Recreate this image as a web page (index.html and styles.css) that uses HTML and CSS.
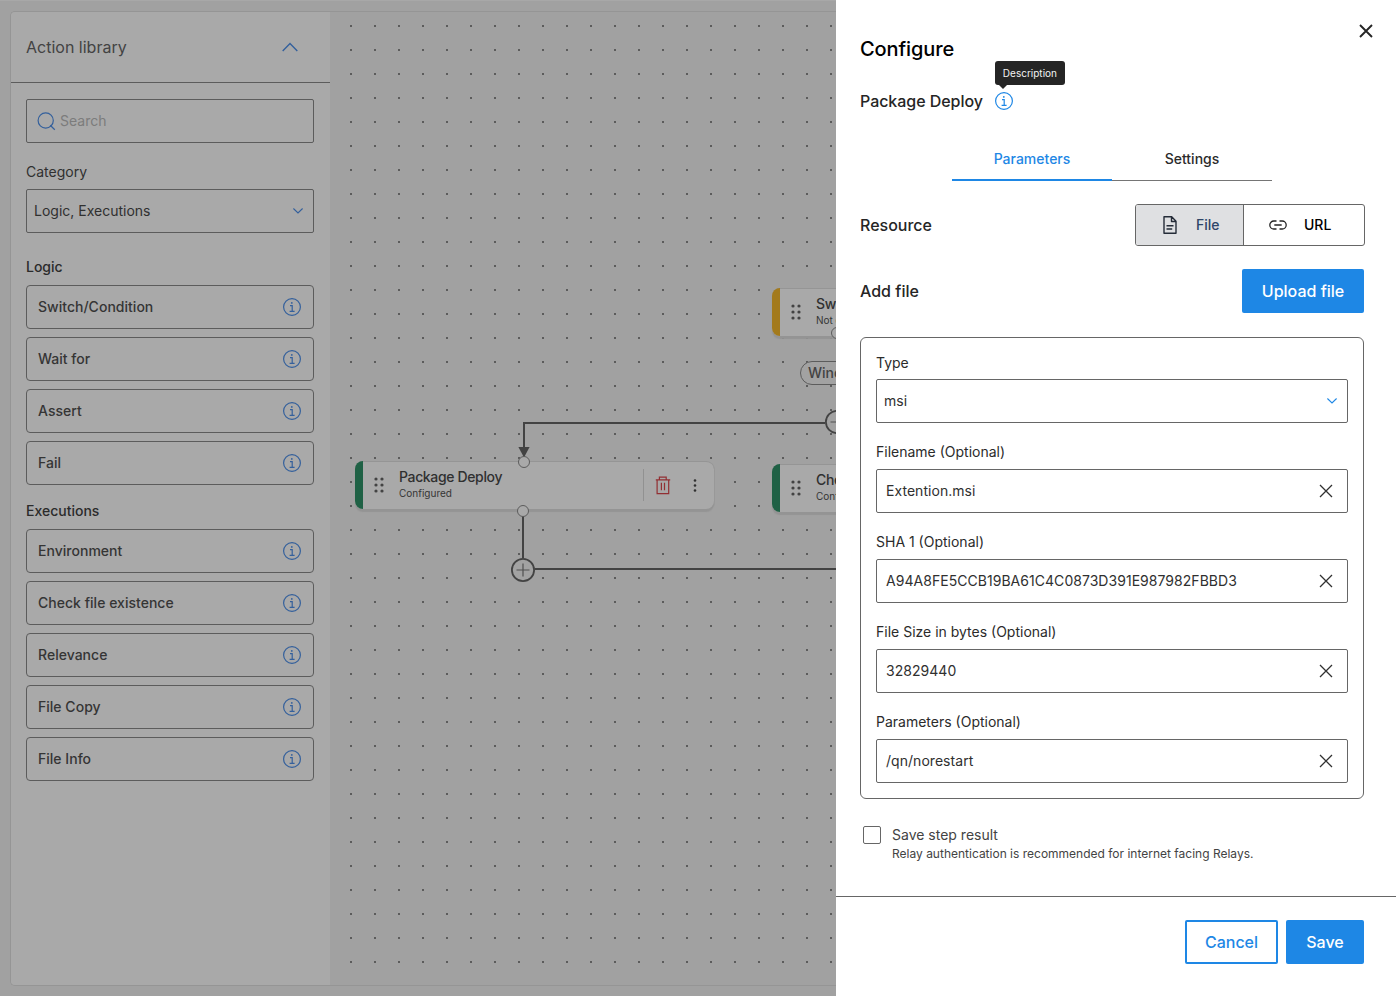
FILE: index.html
```html
<!DOCTYPE html>
<html lang="en">
<head>
<meta charset="utf-8">
<title>Configure action</title>
<link rel="stylesheet" href="styles.css">
</head>
<body>
<svg class="defs" width="0" height="0">
  <symbol id="info" viewBox="0 0 18 18"><circle cx="9" cy="9" r="8.4" fill="none" stroke="currentColor" stroke-width="1.2"/><circle cx="8.8" cy="4.9" r=".9" fill="currentColor"/><path d="M7 7.7h2.2v5.6M6.6 13.4h5" fill="none" stroke="currentColor" stroke-width="1.2"/></symbol>
  <symbol id="cross" viewBox="0 0 14 14"><path d="M1 1l12 12M13 1L1 13" fill="none" stroke="currentColor" stroke-width="1.3"/></symbol>
  <symbol id="chev" viewBox="0 0 10 6"><path d="M.4.5L5 5 9.6.5" fill="none" stroke="currentColor" stroke-width="1.1"/></symbol>
  <symbol id="grip" viewBox="0 0 10 16"><g fill="currentColor"><circle cx="2" cy="2" r="1.6"/><circle cx="8" cy="2" r="1.6"/><circle cx="2" cy="8" r="1.6"/><circle cx="8" cy="8" r="1.6"/><circle cx="2" cy="14" r="1.6"/><circle cx="8" cy="14" r="1.6"/></g></symbol>
</svg>
<div class="app">
  <div class="workspace">
    <div class="shell">
      <aside class="library">
        <header class="library-head"><span>Action library</span><svg class="collapse" width="16" height="10" viewBox="0 0 16 10"><path d="M.7 9L8 1.6 15.3 9" fill="none" stroke="currentColor" stroke-width="1.4"/></svg></header>
        <div class="library-body">
          <div class="search"><svg width="19" height="19" viewBox="0 0 19 19"><circle cx="8.7" cy="8.5" r="7.6" fill="none" stroke="currentColor" stroke-width="1.2"/><path d="M13.2 13.2l4.6 4.5" stroke="currentColor" stroke-width="1.2"/></svg><span>Search</span></div>
          <div class="label">Category</div>
          <div class="category"><span>Logic, Executions</span><svg width="10" height="6"><use href="#chev"/></svg></div>
          <div class="group first">Logic</div>
          <div class="items">
            <div class="item"><span>Switch/Condition</span><svg width="18" height="18"><use href="#info"/></svg></div>
            <div class="item"><span>Wait for</span><svg width="18" height="18"><use href="#info"/></svg></div>
            <div class="item"><span>Assert</span><svg width="18" height="18"><use href="#info"/></svg></div>
            <div class="item"><span>Fail</span><svg width="18" height="18"><use href="#info"/></svg></div>
          </div>
          <div class="group">Executions</div>
          <div class="items">
            <div class="item"><span>Environment</span><svg width="18" height="18"><use href="#info"/></svg></div>
            <div class="item"><span>Check file existence</span><svg width="18" height="18"><use href="#info"/></svg></div>
            <div class="item"><span>Relevance</span><svg width="18" height="18"><use href="#info"/></svg></div>
            <div class="item"><span>File Copy</span><svg width="18" height="18"><use href="#info"/></svg></div>
            <div class="item"><span>File Info</span><svg width="18" height="18"><use href="#info"/></svg></div>
          </div>
        </div>
      </aside>
      <main class="canvas">
        <div class="node node-switch"><i class="stripe amber"></i><svg class="grip" width="10" height="16"><use href="#grip"/></svg><div class="node-text"><b>Switch/Condition</b><small>Not configured</small></div></div>
        <div class="node node-package"><i class="stripe"></i><svg class="grip" width="10" height="16"><use href="#grip"/></svg><div class="node-text"><b>Package Deploy</b><small>Configured</small></div>
          <div class="node-tools">
            <svg class="trash" width="16" height="19" viewBox="0 0 16 19"><path d="M.8 3.9h14.4M4.4 3.9V1.100h6.800v2.800M2.100 3.900v13.700h11.600V3.900M6.400 6.700v7.600M9.500 6.700v7.600" fill="none" stroke="currentColor" stroke-width="1.2"/></svg>
            <svg width="4" height="13" viewBox="0 0 4 13"><g fill="currentColor"><circle cx="2" cy="1.5" r="1.3"/><circle cx="2" cy="6.5" r="1.3"/><circle cx="2" cy="11.5" r="1.3"/></g></svg>
          </div></div>
        <div class="node node-check"><i class="stripe"></i><svg class="grip" width="10" height="16"><use href="#grip"/></svg><div class="node-text"><b>Check file existence</b><small>Configured</small></div></div>
        <div class="pill">Windows</div>
        <svg class="wires" width="506" height="973" viewBox="330 12 506 973">
          <g fill="none" stroke="#434343" stroke-width="2"><path d="M825 423H524V450M523 516V558M535 569H836"/></g>
          <path d="M518.4 447h11.2L524 457.5z" fill="#434343"/>
          <g fill="#a9a9a9" stroke="#5c5c5c"><circle cx="524" cy="462" r="5.5"/><circle cx="523" cy="511" r="5.5"/><circle cx="837" cy="333" r="5.5"/></g>
          <g fill="#a2a2a2" stroke="#434343" stroke-width="1.8"><circle cx="523" cy="570" r="11.1"/><circle cx="837" cy="422" r="11.1"/></g>
          <path d="M516.5 570h13M523 563.5v13M830.5 422h13" stroke="#505050" stroke-width="1.2"/>
        </svg>
      </main>
    </div>
  </div>
  <section class="panel">
    <div class="panel-main">
      <div class="title-row"><h1>Configure</h1><svg class="close" width="14" height="14" viewBox="0 0 14 14"><path d="M1 1l12 12M13 1L1 13" stroke="currentColor" stroke-width="1.9"/></svg></div>
      <div class="action-row"><span>Package Deploy</span><div class="hint"><svg width="18" height="18"><use href="#info"/></svg><div class="tooltip">Description</div></div></div>
      <nav class="tabs"><div class="tab active">Parameters</div><div class="tab">Settings</div></nav>
      <div class="row resource"><span>Resource</span>
        <div class="toggle">
          <div class="option selected"><svg width="14" height="18" viewBox="0 0 14 18"><path d="M1 .8h7.7L13 5.3v11.9H1zM8.5.8v4.7H13M3.5 9.8h7M3.5 13h5.7" fill="none" stroke="currentColor" stroke-width="1.4" stroke-linejoin="round"/></svg><span>File</span></div>
          <div class="option"><svg width="18" height="10" viewBox="0 0 18 10"><path d="M7.5 1H4.8a4 4 0 0 0 0 8h2.7M10.5 1h2.7a4 4 0 0 1 0 8h-2.7M5.3 5h7.4" fill="none" stroke="currentColor" stroke-width="1.3"/></svg><span>URL</span></div>
        </div></div>
      <div class="row add"><span>Add file</span><div class="btn primary upload">Upload file</div></div>
      <div class="form">
        <div class="field type"><label>Type</label><div class="box"><span>msi</span><svg class="blue" width="10" height="6"><use href="#chev"/></svg></div></div>
        <div class="field"><label>Filename (Optional)</label><div class="box"><span>Extention.msi</span><svg width="14" height="14"><use href="#cross"/></svg></div></div>
        <div class="field"><label>SHA 1 (Optional)</label><div class="box"><span>A94A8FE5CCB19BA61C4C0873D391E987982FBBD3</span><svg width="14" height="14"><use href="#cross"/></svg></div></div>
        <div class="field"><label>File Size in bytes (Optional)</label><div class="box"><span>32829440</span><svg width="14" height="14"><use href="#cross"/></svg></div></div>
        <div class="field"><label>Parameters (Optional)</label><div class="box"><span>/qn/norestart</span><svg width="14" height="14"><use href="#cross"/></svg></div></div>
      </div>
      <div class="check"><i class="checkbox"></i><div><div class="check-label">Save step result</div><div class="check-note">Relay authentication is recommended for internet facing Relays.</div></div></div>
    </div>
    <footer class="actions"><div class="btn outline">Cancel</div><div class="btn primary save">Save</div></footer>
  </section>
</div>
</body>
</html>
```
FILE: styles.css
```css
* { box-sizing: border-box; }
body { margin: 0; font-family: Inter, "Liberation Sans", sans-serif; font-size: 14px; line-height: 20px; color: #2b2b2b; }
svg { display: block; flex: none; }
.defs { position: absolute; }
.app { display: flex; width: 1396px; height: 996px; overflow: hidden; background: #a1a1a1; }
.workspace { flex: none; width: 836px; padding: 10px 0 10px 10px; border-top: 1px solid #a8a8a8; }
.shell { display: flex; height: 975px; border: 1px solid #959595; border-right: 0; border-radius: 5px 0 0 5px; overflow: hidden; }

.library { flex: none; width: 319px; background: #a9a9a9; }
.library-head { display: flex; align-items: center; justify-content: space-between; height: 71px; padding: 0 32px 0 15px; border-bottom: 1px solid #5c5c5c; font-size: 16px; color: #434343; }
.collapse, .search svg, .category svg, .item svg { color: #34609c; }
.library-body { padding: 16px 16px 0 15px; }
.search, .category { display: flex; align-items: center; height: 44px; border: 1px solid #5c5c5c; border-radius: 2px; }
.search { gap: 4px; padding-left: 10px; color: #7c7c7c; }
.label { margin: 19px 0 7px; color: #303030; }
.category { justify-content: space-between; padding: 0 10px 0 7px; color: #303030; }
.group { margin: 16px 0 8px; font-weight: 500; }
.group.first { margin-top: 24px; }
.items { display: grid; gap: 8px; }
.item { display: flex; align-items: center; justify-content: space-between; height: 44px; padding: 0 12px 0 11px; border: 1px solid #5c5c5c; border-radius: 4px; font-weight: 500; color: #353535; letter-spacing: .02px; }

.canvas { position: relative; flex: 1; overflow: hidden; background: #a1a1a1 conic-gradient(from 90deg at 22px 22px, #5c5c5c 0 25%, transparent 0) -2px -9px / 24px 24px; }
.wires { position: absolute; left: 0; top: 0; }
.node { position: absolute; display: flex; align-items: center; width: 359px; height: 48px; border-top: 1px solid #959595; border-radius: 8px; background: #a9a9a9; box-shadow: 0 3px 1px #949494, 1px 1px 0 #989898; }
.node-package { left: 25px; top: 449px; }
.node-switch { left: 442px; top: 276px; }
.node-check { left: 442px; top: 452px; }
.stripe { align-self: stretch; width: 8px; margin-top: -1px; border-radius: 8px 0 0 8px; background: #1f6145; }
.stripe.amber { background: #a37a1c; }
.grip { margin: -1px 0 0 11px; color: #434343; }
.node-text { display: flex; flex-direction: column; margin: -4px 0 0 15px; flex: 1; }
.node-text b { font-weight: 500; line-height: 18px; color: #303030; letter-spacing: -.36px; white-space: nowrap; }
.node-text small { font-size: 10px; line-height: 14px; color: #353535; white-space: nowrap; }
.node-tools { display: flex; align-items: center; gap: 22px; height: 32px; margin-top: -1px; padding: 0 17px 0 11px; border-left: 1px solid #919191; color: #303030; }
.trash { color: #922f33; }
.pill { position: absolute; left: 470px; top: 349px; height: 24px; padding: 0 8px 0 7px; border: 1px solid #5c5c5c; border-radius: 12px; font-weight: 500; line-height: 22px; color: #434343; background: #a2a2a2; }

.panel { display: flex; flex: none; flex-direction: column; width: 560px; background: #fff; }
.panel-main { height: 896px; padding: 24px 32px 0 24px; }
.title-row { display: flex; justify-content: space-between; height: 50px; }
h1 { margin: 11px 0 0; font-size: 20px; line-height: 28px; font-weight: 500; letter-spacing: -.1px; color: #000; }
.close { margin: 0 -9px 0 0; color: #252525; }
.action-row { display: flex; align-items: center; gap: 12px; height: 54px; font-size: 16px; font-weight: 500; letter-spacing: -.05px; color: #252525; }
.hint { position: relative; color: #1e87e5; }
.tooltip { position: absolute; left: 0; bottom: 25px; width: 70px; height: 24px; padding: 0 8px; border-radius: 3px; background: #252525; color: #f3f3f3; font-size: 10px; line-height: 24px; font-weight: 400; letter-spacing: 0; }
.tooltip::after { content: ""; position: absolute; left: 4px; top: 24px; border: 4px solid transparent; border-top-color: #252525; border-bottom: 0; }
.tabs { display: flex; width: 320px; margin: 9px 0 0 92px; }
.tab { flex: 1; height: 44px; border-bottom: 1px solid #757575; text-align: center; line-height: 44px; font-weight: 500; }
.tab.active { border-bottom: 2px solid #1e87e5; color: #1e87e5; }
.row { display: flex; align-items: center; justify-content: space-between; font-size: 16px; font-weight: 500; color: #252525; }
.resource { margin-top: 23px; height: 42px; }
.toggle { display: flex; width: 230px; height: 42px; margin-right: -1px; border: 1px solid #666; border-radius: 3px; font-size: 14px; overflow: hidden; }
.option { display: flex; align-items: center; flex: 1; gap: 17px; padding-left: 25px; color: #252525; }
.option:last-child span { color: #000; }
.option.selected { flex: none; width: 108px; gap: 19px; padding-left: 27px; border-right: 1px solid #666; background: #dfe0e2; color: #252c38; }
.option.selected span { color: #2e4568; }
.add { margin-top: 23px; height: 44px; }
.btn { display: flex; align-items: center; justify-content: center; height: 44px; border-radius: 2px; font-size: 16px; font-weight: 500; }
.primary { background: #1e87e5; color: #fff; }
.upload { width: 122px; }
.form { height: 462px; margin-top: 24px; padding: 15px; border: 1px solid #666; border-radius: 6px; }
.field label { display: block; height: 27px; line-height: 20px; }
.field + .field { margin-top: 19px; }
.field.type label { height: 26px; }
.box { display: flex; align-items: center; justify-content: space-between; height: 44px; padding: 0 14px 0 9px; border: 1px solid #666; border-radius: 2px; color: #303030; letter-spacing: .04px; }
.type .box { padding: 0 10px 0 7px; }
.blue { color: #1e87e5; }
.check { display: flex; gap: 11px; margin: 26px 0 0 3px; color: #434343; }
.checkbox { flex: none; width: 18px; height: 18px; margin-top: 1px; border: 1px solid #666; border-radius: 2px; }
.check-note { font-size: 12px; line-height: 18px; }
.actions { display: flex; justify-content: flex-end; gap: 8px; height: 100px; padding: 23px 32px 0 0; border-top: 1px solid #666; }
.outline { width: 93px; border: 2px solid #1e87e5; color: #1e87e5; }
.save { width: 78px; }
```
